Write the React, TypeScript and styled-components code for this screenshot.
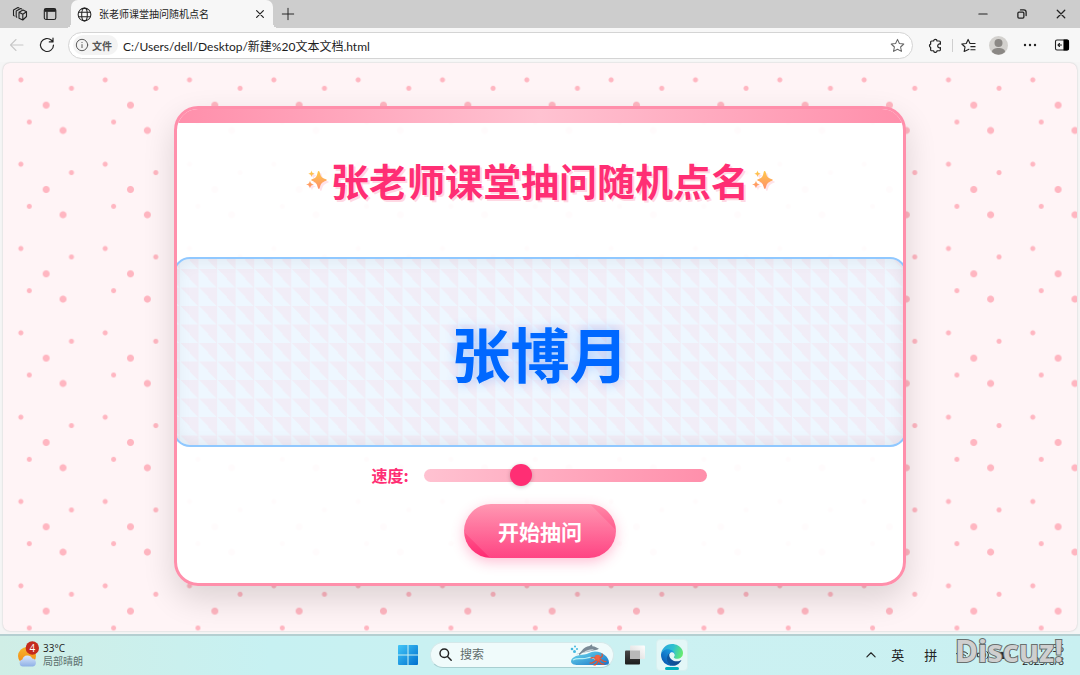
import React, { useState } from "react";
import styled, { createGlobalStyle } from "styled-components";

const uiFont = `"Open Sans", "Noto Sans CJK SC", sans-serif`;
const cjkFont = `"Noto Sans CJK SC", "Noto Sans", sans-serif`;

const GlobalStyle = createGlobalStyle`
  *, *::before, *::after { box-sizing: border-box; }
  body { margin: 0; font-family: ${uiFont}; font-size: 12px; color: #222; background: #f7f7f7; }
  button { font: inherit; color: inherit; border: 0; padding: 0; background: none; cursor: pointer; }
  svg { display: block; }
`;

const Desktop = styled.div`
  display: flex;
  flex-direction: column;
  min-height: 100vh;
`;

/* ---------- browser chrome ---------- */

const TabStrip = styled.header`
  display: flex;
  align-items: stretch;
  height: 28px;
  padding-left: 10px;
  background: #cdcdcd;
`;

const IconButton = styled.button<{ $w?: number }>`
  display: flex;
  align-items: center;
  justify-content: center;
  flex: none;
  width: ${(p) => p.$w ?? 20}px;
`;

const StripTools = styled.div`
  display: flex;
  gap: 10px;
  padding-right: 11px;
`;

const Tab = styled.div`
  position: relative;
  display: flex;
  align-items: center;
  width: 202px;
  padding: 0 4px 0 6px;
  border-radius: 7px 7px 0 0;
  background: #f7f7f7;
  &::before, &::after {
    content: "";
    position: absolute;
    bottom: 0;
    width: 5px;
    height: 5px;
  }
  &::before { left: -5px; background: radial-gradient(circle at 0 0, #cdcdcd 5px, #f7f7f7 5px); }
  &::after { right: -5px; background: radial-gradient(circle at 100% 0, #cdcdcd 5px, #f7f7f7 5px); }
`;

const TabTitle = styled.span`
  flex: 1;
  margin-left: 7px;
  padding-bottom: 1px;
  font-size: 10px;
  line-height: 14px;
  white-space: nowrap;
`;

const WindowControls = styled.div`
  display: flex;
  margin-left: auto;
`;

const Toolbar = styled.div`
  display: flex;
  align-items: center;
  height: 34px;
  padding-left: 6px;
  background: #f7f7f7;
`;

const AddressBar = styled.div`
  display: flex;
  align-items: center;
  flex: 1;
  height: 27px;
  margin: 0 9px 0 2px;
  padding: 0 7px 0 4px;
  border: 1px solid #d4d4d4;
  border-radius: 14px;
  background: #fff;
`;

const FileChip = styled.span`
  display: flex;
  align-items: center;
  gap: 3px;
  height: 20px;
  padding: 0 6px 0 2px;
  border-radius: 10px;
  background: #f3f3f3;
  color: #555;
  font-size: 10px;
  font-weight: 600;
`;

const AddressInput = styled.input`
  flex: 1;
  min-width: 0;
  margin-left: 5px;
  padding: 0;
  border: 0;
  outline: 0;
  background: none;
  color: #1c1c1c;
  font-family: Lato, "Noto Sans CJK SC", sans-serif;
  font-size: 12px;
`;

const Divider = styled.span`
  width: 1px;
  height: 13px;
  background: #cfcfcf;
`;

/* ---------- web page ---------- */

const Viewport = styled.div`
  flex: 1;
  display: flex;
  padding: 1px 3px 3px;
  background: #f5f5f5;
`;

const Page = styled.main`
  --tile: calc(253px / 3);
  flex: 1;
  padding: 43px 20px;
  border-radius: 7px;
  box-shadow: 0 0 2px rgba(0, 0, 0, 0.2);
  background-color: #fff4f6;
  background-image:
    radial-gradient(circle at 20% 20%, #ffb6c1 2px, transparent 3px),
    radial-gradient(circle at 80% 30%, #ffb6c1 2px, transparent 3px),
    radial-gradient(circle at 50% 50%, #ffb6c1 3px, transparent 4px),
    radial-gradient(circle at 30% 70%, #ffb6c1 2px, transparent 3px),
    radial-gradient(circle at 70% 80%, #ffb6c1 3px, transparent 4px);
  background-position: 1px 0;
  background-size: var(--tile) var(--tile);
`;

const Card = styled.section`
  width: 100%;
  max-width: 732px;
  margin: 0 auto;
  overflow: hidden;
  border: 3px solid #ff8fab;
  border-radius: 24px;
  background: rgba(255, 255, 255, 0.95);
  background-clip: padding-box;
  box-shadow: 0 13px 32px rgba(0, 0, 0, 0.14);
  font-family: ${cjkFont};
  &::before {
    content: "";
    display: block;
    height: 14px;
    background: linear-gradient(90deg, #ff8fab, #ffc2d1, #ff8fab);
  }
`;

const Title = styled.h1`
  display: flex;
  align-items: center;
  justify-content: center;
  gap: 3px;
  margin: 0;
  padding: 34px 0 54px;
  color: #ff2e74;
  font-size: 38px;
  line-height: 46px;
  white-space: nowrap;
  text-shadow: 2px 2px 0 #ffd9e4;
  svg { filter: drop-shadow(2px 2px 0 #ffe3ea); }
`;

const NameDisplay = styled.div`
  display: flex;
  align-items: center;
  justify-content: center;
  height: 190px;
  margin: 0 -4px;
  padding-top: 2px;
  border: 2px solid #90c8ff;
  border-radius: 17px;
  background:
    linear-gradient(45deg, transparent 50%, rgba(255, 194, 209, 0.18) 50%) 5px 10px / calc(167px / 9) calc(37px / 2),
    #eef7ff;
  box-shadow: inset 0 0 17px rgba(0, 0, 0, 0.08);
  color: #0068ff;
  font-size: 59px;
  font-weight: 700;
  line-height: 80px;
  text-shadow: 0 0 12px rgba(0, 104, 255, 0.3);
`;

const Controls = styled.div`
  display: flex;
  flex-direction: column;
  align-items: center;
  gap: 15px;
  padding: 14px 20px 25px;
`;

const SpeedRow = styled.div`
  display: flex;
  align-items: center;
  gap: 15px;
  height: 28px;
  padding-right: 2px;
  color: #ff2e74;
  font-size: 16px;
  font-weight: 700;
`;

const SpeedSlider = styled.input`
  appearance: none;
  width: 283px;
  height: 13px;
  margin: 0;
  border-radius: 7px;
  background: linear-gradient(90deg, #ffc2d1, #ff8fab);
  &::-webkit-slider-thumb {
    appearance: none;
    width: 22px;
    height: 22px;
    border-radius: 50%;
    background: #ff2e74;
    box-shadow: 0 1px 4px rgba(0, 0, 0, 0.2);
  }
`;

const StartButton = styled.button`
  width: 152px;
  height: 54px;
  border-radius: 27px;
  background:
    linear-gradient(45deg, transparent 18px, rgba(255, 255, 255, 0.12) 19px, rgba(255, 255, 255, 0.12) calc(100% - 19px), transparent calc(100% - 18px)),
    linear-gradient(#ff8aa8, #ff2a72);
  box-shadow: 0 4px 13px rgba(255, 46, 116, 0.3);
  color: #fff;
  font-size: 21px;
  font-weight: 700;
  line-height: 30px;
`;

/* ---------- taskbar ---------- */

const Taskbar = styled.footer`
  position: relative;
  display: grid;
  grid-template-columns: 1fr auto 1fr;
  align-items: center;
  height: 41px;
  padding: 0 12px 2px 18px;
  border-top: 2px solid #b5cfd1;
  background: linear-gradient(90deg, #d0eee6, #c7f1f2 25%, #ccf1f2 60%, #c9f0f1);
`;

const Weather = styled.button`
  display: flex;
  align-items: center;
  gap: 4px;
  justify-self: start;
  text-align: left;
  font-size: 10px;
  line-height: 13px;
  span { display: block; }
  span + span { color: #5c706e; }
`;

const Dock = styled.div`
  display: flex;
  align-items: center;
`;

const SearchBox = styled.label`
  display: flex;
  align-items: center;
  width: 184px;
  height: 26px;
  margin: 0 10px 0 12px;
  padding: 0 3px 0 8px;
  border: 1px solid #d5e9ea;
  border-bottom-color: #a9cfd1;
  border-radius: 13px;
  background: #f0fbfb;
  input {
    flex: 1;
    min-width: 0;
    margin-left: 8px;
    padding: 0;
    border: 0;
    outline: 0;
    background: none;
    font-family: ${uiFont};
    font-size: 12px;
  }
  input::placeholder { color: #616b6b; opacity: 1; }
`;

const ActiveApp = styled.button`
  position: relative;
  display: flex;
  align-items: center;
  justify-content: center;
  width: 32px;
  height: 32px;
  margin-left: 11px;
  border: 1px solid #d8f0f0;
  border-radius: 4px;
  background: #e3f7f7;
  &::after {
    content: "";
    position: absolute;
    bottom: 0;
    width: 14px;
    height: 3px;
    border-radius: 2px;
    background: #00b0bd;
  }
`;

const Tray = styled.div`
  display: flex;
  align-items: center;
  justify-self: end;
  padding-right: 4px;
`;

const TrayLang = styled.button`
  width: 33px;
  font-size: 13px;
  line-height: 18px;
`;

const TrayIcons = styled.div`
  display: flex;
  align-items: center;
  gap: 7px;
  margin: 0 11px 0 8px;
`;

const Clock = styled.time`
  text-align: right;
  font-size: 10px;
  line-height: 13px;
  span { display: block; }
`;

const Watermark = styled.span`
  position: absolute;
  right: 17px;
  top: -8px;
  color: #cfcfcf;
  font-family: "Open Sans", sans-serif;
  font-size: 31px;
  font-weight: 700;
  line-height: 44px;
  -webkit-text-stroke: 2px #69706f;
  paint-order: stroke fill;
  pointer-events: none;
`;

/* ---------- drawings ---------- */

const Line = ({ size = 16, w = 1.1, color = "#222", children }: { size?: number; w?: number; color?: string; children: React.ReactNode }) => (
  <svg width={size} height={size} viewBox="0 0 16 16" fill="none" stroke={color} strokeWidth={w} strokeLinecap="round" strokeLinejoin="round" aria-hidden="true">
    {children}
  </svg>
);

const Sparkles = ({ id }: { id: string }) => (
  <svg width="22" height="22" viewBox="0 0 22 22" fill={`url(#${id})`} aria-hidden="true">
    <defs>
      <linearGradient id={id} x1="0" y1="0" x2="0" y2="22" gradientUnits="userSpaceOnUse">
        <stop offset="0.1" stopColor="#ffc94a" />
        <stop offset="0.9" stopColor="#ff8f6b" />
      </linearGradient>
    </defs>
    <path d="M12.500 2Q13.300 2 13.700 3.200C14.900 8 15.800 8.800 20 10.300Q21.400 11 20 11.800C15.900 13.400 14.900 14.400 13.700 19Q12.900 20.800 12 19C10.700 14.400 9.900 13.400 6 11.800Q4.500 11 6 10.300C9.900 8.800 10.700 8 11.700 3.200Q11.900 2 12.500 2Z" />
    <path d="M5.500 1.500C6 3.600 6.400 4.100 8.700 4.700C6.400 5.300 6 5.800 5.500 8C5 5.800 4.600 5.300 2.300 4.700C4.600 4.100 5 3.600 5.500 1.500Z" />
    <path d="M4 11.500C4.700 14.300 5.200 14.800 8 15.500C5.200 16.200 4.700 16.700 4 19.500C3.300 16.700 2.800 16.200 0 15.500C2.800 14.800 3.300 14.300 4 11.500Z" />
  </svg>
);

const WeatherIcon = () => (
  <svg width="21" height="28" viewBox="0 0 21 28" aria-hidden="true">
    <defs>
      <linearGradient id="sun" x1="0" y1="0" x2="0" y2="1"><stop stopColor="#f8b62c" /><stop offset="1" stopColor="#ef8412" /></linearGradient>
      <linearGradient id="cloud" x1="0" y1="0" x2="0" y2="1"><stop stopColor="#dce9fc" /><stop offset="1" stopColor="#8eb0e6" /></linearGradient>
    </defs>
    <circle cx="9" cy="15" r="9" fill="url(#sun)" />
    <path d="M5 25.500a3.600 3.600 0 0 1-.6-7.100 5.200 5.200 0 0 1 9.800-.9 4.100 4.100 0 0 1 .8 8z" fill="url(#cloud)" />
    <circle cx="14.300" cy="7" r="6.700" fill="#c42b1c" />
    <text x="14.300" y="10.600" textAnchor="middle" fontSize="10" fill="#fff">4</text>
  </svg>
);

const WindowsLogo = () => (
  <svg width="20" height="20" viewBox="0 0 20 20" aria-hidden="true">
    <defs><linearGradient id="win" x1="0" y1="0" x2="1" y2="1"><stop stopColor="#42c6f7" /><stop offset="1" stopColor="#0070cf" /></linearGradient></defs>
    <path fill="url(#win)" d="M1 0h8.500v9.500H0V1a1 1 0 0 1 1-1zM10.500 0H19a1 1 0 0 1 1 1v8.500h-9.500zM0 10.500h9.500V20H1a1 1 0 0 1-1-1zM10.500 10.500H20V19a1 1 0 0 1-1 1h-8.500z" />
  </svg>
);

const SearchArt = () => (
  <svg width="40" height="24" viewBox="0 0 40 24" aria-hidden="true">
    <defs><linearGradient id="sea" x1="0" y1="0" x2="1" y2="1"><stop stopColor="#6fdcec" /><stop offset="1" stopColor="#1672c8" /></linearGradient></defs>
    <path d="M1 18C2 13 9 12 14 11.500c4 0 6-3 11-3 8 0 14 6 14 11 0 2.500-3 2.500-6 2.500H8c-4 0-7-1-7-4z" fill="url(#sea)" />
    <path d="M3 17c5-3 9 0 14-2s6 1 8 1" stroke="#b5eff5" strokeWidth="1.300" fill="none" />
    <path d="M6 11.500C9 10.800 10 10 11.500 8c2-3 5-4.500 8-5l2.500-1.700.3 2c3 .2 4.500 1.700 6.700 2.400-1.600 1.300-4 1.300-6 1.800-3 .5-5 1.500-8 1.700-3 .3-4 1.300-5.500 3.300l-.7-2.300z" fill="#7a8a96" />
    <path d="M14 9c3-2 6-3 10-2.700-2 1.700-5 2.200-8 2.700z" fill="#cdd7dc" />
    <g fill="#45b9e0"><circle cx="2" cy="6" r="1.300" /><circle cx="5" cy="3.500" r="1" /><circle cx="4.500" cy="8.500" r="1.500" /><circle cx="7" cy="6" r="1" /></g>
    <ellipse cx="27.500" cy="15" rx="3" ry="3.200" fill="#ee6545" />
    <g stroke="#e4512f" strokeWidth="1.200" fill="none" strokeLinecap="round">
      <path d="M27 17c-3 1-4 4-7 3M28 18c-1 3-2 4-4 4M29 18c1 2 2 4 5 3M30 16.500c3 0 3 3 6 2M25 15c-2 0-3-1-4 0M30 15c2-1 3-2 2-4" />
    </g>
  </svg>
);

const TaskView = () => (
  <svg width="21" height="20" viewBox="0 0 21 20" aria-hidden="true">
    <defs>
      <linearGradient id="tv1" x1="0" y1="0" x2="0" y2="1"><stop stopColor="#484848" /><stop offset="1" stopColor="#1c1c1c" /></linearGradient>
      <linearGradient id="tv2" x1="1" y1="0" x2="0" y2="1"><stop stopColor="#fff" /><stop offset="1" stopColor="#d5d5d5" /></linearGradient>
    </defs>
    <rect x="1" y="5.500" width="15" height="14" rx="1" fill="url(#tv1)" />
    <rect x="6" y="0.500" width="15" height="13.500" rx="1" fill="url(#tv2)" />
    <path d="M6 5.500h10V14H6.800a.8.8 0 0 1-.8-.8z" fill="#b8b8b8" />
  </svg>
);

const EdgeLogo = () => (
  <svg width="22" height="22" viewBox="0 0 256 256" aria-hidden="true">
    <defs>
      <linearGradient id="e1" x1="63" y1="178" x2="241" y2="178" gradientUnits="userSpaceOnUse"><stop stopColor="#0c59a4" /><stop offset="1" stopColor="#114a8b" /></linearGradient>
      <linearGradient id="e2" x1="157" y1="100" x2="46" y2="221" gradientUnits="userSpaceOnUse"><stop stopColor="#1b9de2" /><stop offset="1" stopColor="#0b5fb8" /></linearGradient>
      <linearGradient id="e3" x1="20" y1="40" x2="250" y2="110" gradientUnits="userSpaceOnUse"><stop stopColor="#2aa9dd" /><stop offset="0.500" stopColor="#2fc2cf" /><stop offset="1" stopColor="#66eb6e" /></linearGradient>
    </defs>
    <path fill="url(#e1)" d="M231 190.500c-3.400 1.800-6.900 3.400-10.500 4.700a101.700 101.700 0 0 1-35.900 6.500c-47.300 0-88.500-32.500-88.500-74.300.1-11.400 6.400-21.900 16.400-27.300-42.800 1.800-53.800 46.400-53.800 72.500 0 73.900 68.100 81.400 82.800 81.400 7.900 0 19.800-2.300 27-4.600l1.300-.4a128.300 128.300 0 0 0 66.600-52.800 4 4 0 0 0-5.400-5.700z" />
    <path fill="url(#e2)" d="M105.700 241.400a79.200 79.200 0 0 1-22.700-21.300 80.700 80.700 0 0 1 29.500-120c3.200-1.500 8.500-4.100 15.600-4a32.400 32.400 0 0 1 25.700 13 31.900 31.900 0 0 1 6.300 18.700c0-.2 24.500-79.600-80-79.600-43.900 0-80 41.700-80 78.200a130.200 130.200 0 0 0 12.100 56 128 128 0 0 0 156.400 67 75.500 75.500 0 0 1-62.800-8z" />
    <path fill="url(#e3)" d="M152.300 148.900c-.9 1-3.300 2.500-3.300 5.700 0 2.600 1.700 5.200 4.800 7.300 14.300 10 41.400 8.600 41.500 8.600a59.600 59.600 0 0 0 30.300-8.300 61.400 61.400 0 0 0 30.400-52.900c.3-22.400-8-37.300-11.300-43.900C223.500 23.900 177.700 0 128 0A128 128 0 0 0 0 126.200c.5-36.500 36.800-66 80-66 3.500 0 23.500.3 42 10.100 16.300 8.600 24.900 18.900 30.800 29.200 6.200 10.700 7.300 24.100 7.300 29.500 0 5.300-2.700 13.300-7.800 19.900z" />
  </svg>
);

export default function App() {
  const [speed, setSpeed] = useState(33);
  const [address, setAddress] = useState("C:/Users/dell/Desktop/新建%20文本文档.html");

  return (
    <Desktop>
      <GlobalStyle />
      <TabStrip>
        <StripTools>
          <IconButton aria-label="工作区">
            <Line>
              <path d="M7 6.300 11 4l3.500 1.700v4.800L10.800 14 7 12.200zM7 6.300l3.800 1.900V14M10.800 8.200l3.700-2.500M4.800 11.200l-.6-.4V5L8.700 2.600l1 .4M2.200 9.900l-.7-.5V3.900L6 1.500l1 .4" />
            </Line>
          </IconButton>
          <IconButton aria-label="标签页操作">
            <Line><rect x="2.300" y="2.500" width="11.500" height="11" rx="1.800" /><path d="M3 3.300h10.200v2H3z" fill="#222" /><path d="M5 6v7" strokeWidth="1.300" /></Line>
          </IconButton>
        </StripTools>
        <Tab>
          <Line size={15}><circle cx="8" cy="8" r="6.800" /><ellipse cx="8" cy="8" rx="3" ry="6.800" /><path d="M1.800 5.600h12.400M1.800 10.400h12.400" /></Line>
          <TabTitle>张老师课堂抽问随机点名</TabTitle>
          <IconButton aria-label="关闭标签页" $w={18}><Line size={12} w={1.600}><path d="m3.500 3.500 9 9M12.500 3.500l-9 9" /></Line></IconButton>
        </Tab>
        <IconButton aria-label="新建标签页" $w={30}><Line size={14}><path d="M8 1.500v13M1.500 8h13" /></Line></IconButton>
        <WindowControls>
          <IconButton aria-label="最小化" $w={39}><Line size={12} w={1.500}><path d="M2.500 8h11" /></Line></IconButton>
          <IconButton aria-label="还原" $w={39}><Line size={12} w={1.700}><rect x="2.500" y="5.500" width="8" height="8" rx="1.500" /><path d="M6 2.500h4.500a3 3 0 0 1 3 3V10" /></Line></IconButton>
          <IconButton aria-label="关闭" $w={39}><Line size={12} w={1.700}><path d="M3 3l10 10M13 3 3 13" /></Line></IconButton>
        </WindowControls>
      </TabStrip>

      <Toolbar>
        <IconButton aria-label="后退" $w={22}><Line color="#c8c8c8"><path d="M14 8H1.500M7 2.500 1.500 8 7 13.500" /></Line></IconButton>
        <IconButton aria-label="刷新" $w={38}><Line w={1.200}><path d="M14.500 8a6.500 6.500 0 1 1-2-4.700L14 4.800M14 1.200v3.700h-3.700" /></Line></IconButton>
        <AddressBar>
          <FileChip>
            <Line size={14} color="#555"><circle cx="8" cy="8" r="6.500" /><path d="M8 7.500V11M8 5v.2" /></Line>
            文件
          </FileChip>
          <AddressInput aria-label="地址栏" value={address} onChange={(e) => setAddress(e.target.value)} />
          <IconButton aria-label="收藏此页" $w={15}>
            <Line size={15} color="#666"><path d="m8 1.500 2 4.300 4.700.6-3.400 3.200.9 4.700L8 12l-4.200 2.300.9-4.700L1.300 6.400 6 5.800z" /></Line>
          </IconButton>
        </AddressBar>
        <IconButton aria-label="扩展" $w={26}>
          <Line size={15} w={1.300}><path d="M6 3.200a1.800 1.800 0 0 1 3.600 0H12a1.200 1.200 0 0 1 1.200 1.200v2.200a2 2 0 1 0 0 3.600v2.200A1.200 1.200 0 0 1 12 13.600H9.600a1.800 1.800 0 0 1-3.600 0H4a1.200 1.200 0 0 1-1.200-1.200V10a1.800 1.800 0 0 1 0-3.400V4.400A1.200 1.200 0 0 1 4 3.200z" /></Line>
        </IconButton>
        <IconButton as="span" $w={8}><Divider /></IconButton>
        <IconButton aria-label="收藏夹" $w={25}>
          <Line size={15} w={1.200}><path d="M8.500 12 3.400 14.300l.9-4.700L.9 6.400l4.700-.6 2-4.300 2 4.300H15M10.500 9.200H15M10.500 12.500H15" /></Line>
        </IconButton>
        <IconButton aria-label="个人资料" $w={35}>
          <svg width="19" height="19" viewBox="0 0 19 19" aria-hidden="true">
            <circle cx="9.500" cy="9.500" r="9.500" fill="#d3d1ce" />
            <circle cx="9.500" cy="7" r="4" fill="#8b8885" />
            <path d="M3 16c0-3 3-4 6.500-4s6.500 1 6.500 4a9 9 0 0 1-13 0z" fill="#8b8885" />
          </svg>
        </IconButton>
        <IconButton aria-label="设置及其他" $w={27}><Line><g fill="#222" stroke="none"><circle cx="3" cy="8" r="1.200" /><circle cx="8" cy="8" r="1.200" /><circle cx="13" cy="8" r="1.200" /></g></Line></IconButton>
        <IconButton aria-label="侧边栏" $w={37}>
          <Line><rect x="1.500" y="3" width="13" height="10" rx="1.500" /><path d="M10 3h3a1.500 1.500 0 0 1 1.500 1.500v7A1.500 1.500 0 0 1 13 13h-3z" fill="#000" stroke="#000" /><path d="M7.500 8H4M5.500 6.500 4 8l1.500 1.500" /></Line>
        </IconButton>
      </Toolbar>

      <Viewport>
        <Page>
          <Card>
            <Title>
              <Sparkles id="spark-left" />
              张老师课堂抽问随机点名
              <Sparkles id="spark-right" />
            </Title>
            <NameDisplay>张博月</NameDisplay>
            <Controls>
              <SpeedRow>
                <label htmlFor="speed">速度:</label>
                <SpeedSlider id="speed" type="range" min={0} max={100} value={speed} onChange={(e) => setSpeed(Number(e.target.value))} />
              </SpeedRow>
              <StartButton type="button">开始抽问</StartButton>
            </Controls>
          </Card>
        </Page>
      </Viewport>

      <Taskbar>
        <Weather>
          <WeatherIcon />
          <div><span>33°C</span><span>局部晴朗</span></div>
        </Weather>
        <Dock>
          <IconButton aria-label="开始"><WindowsLogo /></IconButton>
          <SearchBox>
            <Line size={13} w={1.800}><circle cx="6.500" cy="6.500" r="5.300" /><path d="m10.500 10.500 4.500 4.500" /></Line>
            <input type="text" aria-label="搜索" placeholder="搜索" />
            <SearchArt />
          </SearchBox>
          <IconButton aria-label="任务视图" $w={21}><TaskView /></IconButton>
          <ActiveApp aria-label="Microsoft Edge"><EdgeLogo /></ActiveApp>
        </Dock>
        <Tray>
          <IconButton aria-label="显示隐藏的图标"><Line size={12} w={1.500}><path d="m2.500 10.500 5.500-5.500 5.500 5.500" /></Line></IconButton>
          <TrayLang>英</TrayLang>
          <TrayLang>拼</TrayLang>
          <TrayIcons>
            <Line size={14}><path d="M1.500 6.500a9.200 9.200 0 0 1 13 0M3.700 9a6 6 0 0 1 8.600 0M6 11.300a2.800 2.800 0 0 1 4 0M8 13.300v.1" /></Line>
            <Line size={14}><path d="M2 6h2.500L8 3v10L4.500 10H2zM10.500 6a3 3 0 0 1 0 4M12.500 4a6 6 0 0 1 0 8" /></Line>
            <Line size={14}><rect x="1" y="5" width="12" height="7" rx="1.500" fill="#222" /><path d="M15 7.500v2" /></Line>
          </TrayIcons>
          <Clock><span>15:36</span><span>2025/8/8</span></Clock>
        </Tray>
        <Watermark>Discuz!</Watermark>
      </Taskbar>
    </Desktop>
  );
}
